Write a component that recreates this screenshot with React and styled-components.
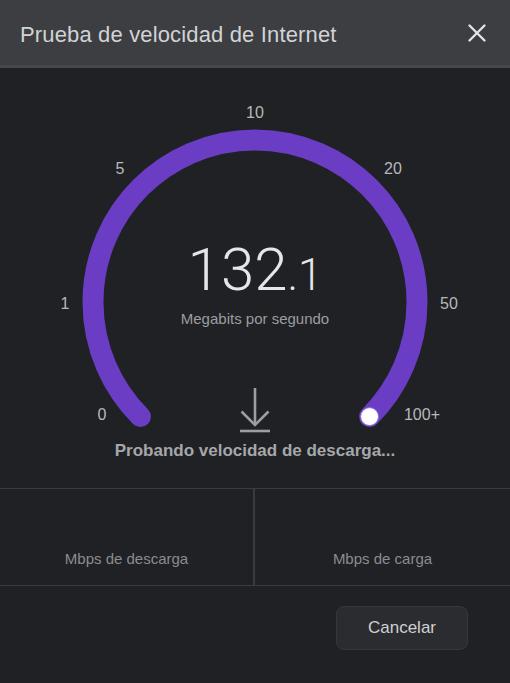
import React from "react";
import styled, { createGlobalStyle } from "styled-components";

const GlobalStyle = createGlobalStyle`
  html, body {
    margin: 0;
    padding: 0;
    background: #202124;
  }
  body {
    font-family: "Liberation Sans", Arial, sans-serif;
  }
  * {
    box-sizing: border-box;
  }
`;

const Dialog = styled.div`
  width: 510px;
  height: 683px;
  background: #202124;
  display: flex;
  flex-direction: column;
  overflow: hidden;
`;

const Header = styled.div`
  height: 68px;
  padding: 4px 22px 0 20px;
  background: #3c3e42;
  border-bottom: 3px solid #46484c;
  display: flex;
  align-items: center;
  justify-content: space-between;
`;

const Title = styled.div`
  font-size: 22px;
  color: #d2d3d5;
  letter-spacing: 0.15px;
`;

const CloseButton = styled.button`
  width: 22px;
  height: 22px;
  padding: 0;
  border: 0;
  background: none;
  display: grid;
  place-items: center;
  cursor: pointer;
  margin-top: -4px;
`;

const GaugeArea = styled.div`
  height: 372px;
  display: grid;
  & > * {
    grid-area: 1 / 1;
  }
`;

const GaugeSvg = styled.svg`
  display: block;
`;

const Readout = styled.div`
  padding-top: 172px;
  display: flex;
  flex-direction: column;
  align-items: center;
`;

const Number = styled.div`
  font-family: Roboto, "Liberation Sans", sans-serif;
  font-weight: 300;
  font-size: 60px;
  line-height: 60px;
  color: #e6e6e8;
  white-space: nowrap;
`;

const Decimal = styled.span`
  font-size: 44px;
`;

const Unit = styled.div`
  margin-top: 5px;
  font-size: 15px;
  line-height: 17px;
  color: #9c9da0;
`;

const IconWrap = styled.div`
  margin-top: 61px;
  display: flex;
`;

const Status = styled.div`
  height: 22px;
  line-height: 22px;
  margin-bottom: 26px;
  text-align: center;
  font-size: 17px;
  font-weight: bold;
  color: #a6a7aa;
`;

const Stats = styled.div`
  display: grid;
  grid-template-columns: 1fr 1fr;
  height: 98px;
  border-top: 1px solid #3a3b3f;
  border-bottom: 1px solid #3a3b3f;
`;

const StatCell = styled.div`
  display: flex;
  align-items: flex-end;
  justify-content: center;
  padding-bottom: 17px;
  border-right: ${props => (props.divider ? "2px solid #3a3b3f" : "none")};
`;

const StatLabel = styled.div`
  font-size: 15px;
  line-height: 18px;
  color: #8b8c90;
`;

const Footer = styled.div`
  display: flex;
  justify-content: flex-end;
  padding: 20px 42px 0 0;
`;

const CancelButton = styled.button`
  width: 132px;
  height: 44px;
  border-radius: 8px;
  border: 1px solid #36373b;
  background: #2b2c30;
  font-family: "Liberation Sans", Arial, sans-serif;
  font-size: 17px;
  color: #cfd0d2;
  cursor: pointer;
`;

const ARC = "#6a3dc4";
const CX = 255;
const CY = 234;
const R = 162;

const ticks = [
  { label: "0", x: 102, y: 414 },
  { label: "1", x: 65, y: 303 },
  { label: "5", x: 120, y: 168 },
  { label: "10", x: 255, y: 112 },
  { label: "20", x: 393, y: 168 },
  { label: "50", x: 449, y: 303 },
  { label: "100+", x: 422, y: 414 }
];

const polar = deg => {
  const a = (deg * Math.PI) / 180;
  return [CX + R * Math.cos(a), CY - R * Math.sin(a)];
};

const Gauge = () => {
  const [sx, sy] = polar(225);
  const [ex, ey] = polar(-45);
  return (
    <GaugeSvg width="510" height="372" viewBox="0 0 510 372">
      <path
        d={`M ${sx} ${sy} A ${R} ${R} 0 1 1 ${ex} ${ey}`}
        fill="none"
        stroke={ARC}
        strokeWidth="21"
        strokeLinecap="round"
      />
      <circle cx={ex} cy={ey} r="9" fill="#fff" stroke="#8a6ad6" strokeWidth="1" />
      {ticks.map(t => (
        <text
          key={t.label}
          x={t.x}
          y={t.y - 68 + 6}
          textAnchor="middle"
          fontFamily="Liberation Sans, Arial, sans-serif"
          fontSize="16"
          fill="#b7b8bb"
        >
          {t.label}
        </text>
      ))}
    </GaugeSvg>
  );
};

const DownloadIcon = () => (
  <svg width="34" height="46" viewBox="0 0 34 46">
    <g stroke="#9d9ea1" strokeWidth="2.6" fill="none">
      <line x1="17" y1="0" x2="17" y2="36" />
      <polyline points="3.5,23.5 17,37 30.5,23.5" />
      <line x1="2" y1="43" x2="32" y2="43" />
    </g>
  </svg>
);

const CloseIcon = () => (
  <svg width="20" height="20" viewBox="0 0 20 20">
    <g stroke="#e2e3e5" strokeWidth="2.4" strokeLinecap="round">
      <line x1="2.5" y1="2.5" x2="17.5" y2="17.5" />
      <line x1="17.5" y1="2.5" x2="2.5" y2="17.5" />
    </g>
  </svg>
);

export default function App() {
  return (
    <>
      <GlobalStyle />
      <Dialog>
        <Header>
          <Title>Prueba de velocidad de Internet</Title>
          <CloseButton aria-label="Cerrar">
            <CloseIcon />
          </CloseButton>
        </Header>
        <GaugeArea>
          <Gauge />
          <Readout>
            <Number>
              132<Decimal>.1</Decimal>
            </Number>
            <Unit>Megabits por segundo</Unit>
            <IconWrap>
              <DownloadIcon />
            </IconWrap>
          </Readout>
        </GaugeArea>
        <Status>Probando velocidad de descarga...</Status>
        <Stats>
          <StatCell divider>
            <StatLabel>Mbps de descarga</StatLabel>
          </StatCell>
          <StatCell>
            <StatLabel>Mbps de carga</StatLabel>
          </StatCell>
        </Stats>
        <Footer>
          <CancelButton>Cancelar</CancelButton>
        </Footer>
      </Dialog>
    </>
  );
}
